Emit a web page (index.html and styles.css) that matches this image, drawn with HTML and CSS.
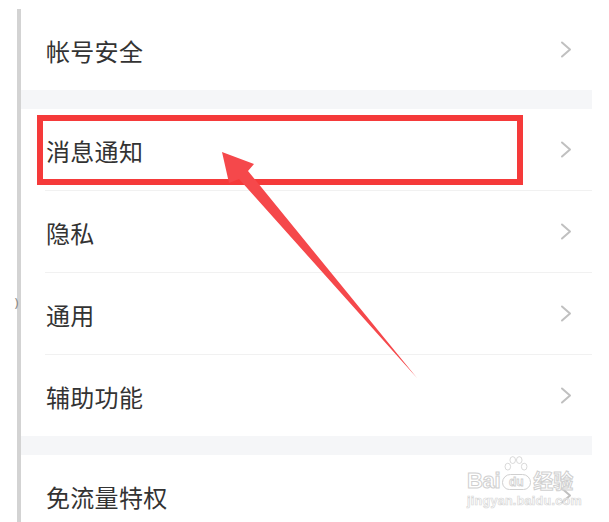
FILE: index.html
```html
<!DOCTYPE html>
<html lang="zh-CN">
<head>
<meta charset="utf-8">
<link rel="stylesheet" href="styles.css">
</head>
<body>
<div class="stage">
  <span class="edge-glyph">)</span>
  <div class="screen">
    <div class="group">
      <div class="row"><div class="row-inner"><span class="label">帐号安全</span><svg class="chev" viewBox="0 0 12 17"><polyline points="2,1.5 10,8.5 2,15.5"/></svg></div></div>
    </div>
    <div class="band"></div>
    <div class="group">
      <div class="row"><div class="row-inner"><span class="label">消息通知</span><svg class="chev" viewBox="0 0 12 17"><polyline points="2,1.5 10,8.5 2,15.5"/></svg></div></div>
      <div class="row"><div class="row-inner"><span class="label">隐私</span><svg class="chev" viewBox="0 0 12 17"><polyline points="2,1.5 10,8.5 2,15.5"/></svg></div></div>
      <div class="row"><div class="row-inner"><span class="label">通用</span><svg class="chev" viewBox="0 0 12 17"><polyline points="2,1.5 10,8.5 2,15.5"/></svg></div></div>
      <div class="row"><div class="row-inner"><span class="label">辅助功能</span><svg class="chev" viewBox="0 0 12 17"><polyline points="2,1.5 10,8.5 2,15.5"/></svg></div></div>
    </div>
    <div class="band"></div>
    <div class="group">
      <div class="row"><div class="row-inner"><span class="label">免流量特权</span><svg class="chev" viewBox="0 0 12 17"><polyline points="2,1.5 10,8.5 2,15.5"/></svg></div></div>
    </div>
  </div>

  <div class="highlight"></div>

  <svg class="arrow" width="609" height="522" viewBox="0 0 609 522">
    <polygon points="222,152 254,164 248,171 417,378 239,179 229,183"/>
  </svg>

  <div class="watermark">
    <div class="wm-top">
      <span class="wm-bai">Bai</span>
      <span class="wm-du">
        <svg class="paw" viewBox="0 0 32 22">
          <ellipse cx="6" cy="13" rx="3.4" ry="4.2"/>
          <ellipse cx="12" cy="5" rx="3.4" ry="4.2"/>
          <ellipse cx="20" cy="5" rx="3.4" ry="4.2"/>
          <ellipse cx="26" cy="13" rx="3.4" ry="4.2"/>
        </svg>
        <span class="du-text">du</span>
      </span>
      <span class="wm-jy">经验</span>
    </div>
    <div class="wm-url">jingyan.baidu.com</div>
  </div>
</div>
</body>
</html>
```

FILE: styles.css
```css
* { box-sizing: border-box; }

html, body {
  margin: 0;
  padding: 0;
  background: #ffffff;
}

body {
  width: 609px;
  height: 522px;
  overflow: hidden;
  font-family: "Noto Sans CJK SC", "Noto Sans", sans-serif;
}

.stage {
  position: relative;
  width: 609px;
  height: 522px;
  overflow: hidden;
  padding-top: 9px;
  padding-left: 17px;
}

.screen {
  width: 575px;
  height: 513px;
  overflow: hidden;
  border-left: 4px solid #d3d3d3;
  background: #ffffff;
}

.band {
  height: 19px;
  background: #f5f6f8;
}

.row {
  padding-left: 24px;
}

.row-inner {
  display: flex;
  align-items: center;
  justify-content: space-between;
  height: 82px;
  padding-left: 1px;
  padding-right: 20px;
  border-bottom: 1px solid #f1f1f1;
}

.group .row:last-child .row-inner {
  height: 81px;
  border-bottom: none;
}

.label {
  font-size: 24px;
  line-height: 30px;
  color: #333333;
  padding-top: 3px;
  letter-spacing: 0.3px;
}

.chev {
  width: 12px;
  height: 17px;
  fill: none;
  stroke: #c0c0c0;
  stroke-width: 2;
}

.chev polyline {
  stroke-linecap: round;
  stroke-linejoin: round;
}

.edge-glyph {
  position: absolute;
  left: 14px;
  top: 296px;
  font-family: "DejaVu Sans", sans-serif;
  font-size: 13px;
  color: #8a8a8a;
}

.highlight {
  position: absolute;
  left: 37px;
  top: 115px;
  width: 486px;
  height: 70px;
  border: 6px solid #f53a3a;
}

.arrow {
  position: absolute;
  left: 0;
  top: 0;
  fill: #f5484b;
}

.watermark {
  position: absolute;
  left: 467px;
  top: 456px;
  width: 112px;
  height: 52px;
  display: flex;
  flex-direction: column;
  align-items: flex-start;
  color: transparent;
}

.wm-top {
  display: flex;
  align-items: flex-end;
  height: 34px;
}

.wm-bai {
  font-family: "Liberation Sans", sans-serif;
  font-weight: 700;
  font-size: 22px;
  line-height: 18px;
  height: 18px;
  -webkit-text-stroke: 1px #d0d0d0;
  color: rgba(255,255,255,0.6);
  letter-spacing: -0.3px;
}

.wm-du {
  width: 32px;
  height: 34px;
  display: flex;
  flex-direction: column;
  align-items: center;
  justify-content: flex-end;
}

.paw {
  width: 28px;
  height: 18px;
  fill: rgba(255,255,255,0.6);
  stroke: #d0d0d0;
  stroke-width: 1;
}

.du-text {
  font-family: "Liberation Sans", sans-serif;
  font-weight: 700;
  font-size: 12px;
  line-height: 14px;
  width: 29px;
  height: 16px;
  text-align: center;
  border: 1px solid #d0d0d0;
  border-radius: 9px 9px 8px 8px;
  -webkit-text-stroke: 0.8px #d0d0d0;
  color: rgba(255,255,255,0.6);
}

.wm-jy {
  font-family: "Noto Sans CJK SC", sans-serif;
  font-weight: 700;
  font-size: 20px;
  line-height: 18px;
  height: 18px;
  -webkit-text-stroke: 1px #d0d0d0;
  color: rgba(255,255,255,0.6);
  margin-left: 1px;
}

.wm-url {
  font-family: "Liberation Sans", sans-serif;
  font-weight: 700;
  font-size: 12.5px;
  line-height: 14px;
  margin-top: 4px;
  -webkit-text-stroke: 0.7px #d8d8d8;
  color: rgba(255,255,255,0.6);
  letter-spacing: 0.3px;
}
```
